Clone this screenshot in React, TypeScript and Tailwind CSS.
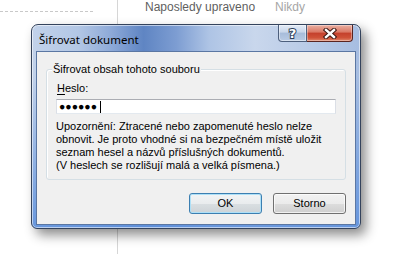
export default function App() {
  const bodyFont = "font-['Liberation_Sans',Arial,sans-serif]";
  return (
    <div className={`relative w-[405px] h-[254px] bg-white overflow-hidden ${bodyFont}`}>
      {/* background page */}
      <div className="flex h-full">
        <div className="w-[117px] pt-[11px]">
          <div className="w-[93px] border-t border-dashed border-[#c9c9c9]" />
        </div>
        <div className="flex-1 border-l border-[#d6d6d6] flex items-start pl-[27px] pt-[1px] text-[12px] leading-[13px]">
          <span className="text-[#5f5f5f] w-[130px]">Naposledy upraveno</span>
          <span className="text-[#a6a6a6]">Nikdy</span>
        </div>
      </div>

      {/* dialog */}
      <div className="absolute left-[31px] top-[24px] w-[330px] h-[205px] rounded-t-[7px] rounded-b-[6px] border border-[#34435c] shadow-[inset_0_0_0_1px_rgba(255,255,255,0.55),5px_6px_12px_rgba(0,0,0,0.45)] bg-[linear-gradient(180deg,rgba(120,165,225,0)_25%,rgba(95,145,220,0.9)_100%),linear-gradient(90deg,#c2d2ea_0%,#b3c7e5_14%,#8eaad8_24%,#5f85c3_34%,#7d9dd2_44%,#aec4e5_54%,#c9d7ec_68%,#b9cbe7_84%,#a6bde1_100%)] flex flex-col">
        <div className="h-[27px] pl-[7px] pt-[3px] flex items-center text-[11.5px] text-black font-['Noto_Sans',sans-serif]">
          Šifrovat dokument
        </div>

        {/* caption buttons */}
        <div className="absolute top-0 right-[7px] flex h-[17px]">
          <div className="w-[29px] h-[17px] border border-t-0 border-[#4d5f7c] rounded-bl-[4px] bg-[linear-gradient(180deg,#e3ebf6_0%,#c8d6ea_45%,#a7bcda_50%,#b9cbe4_100%)] shadow-[inset_0_0_0_1px_rgba(255,255,255,0.45)] flex items-center justify-center">
            <span className="text-[13px] leading-[13px] font-bold text-white font-['DejaVu_Sans',sans-serif] [-webkit-text-stroke:2px_#2f3f5a] [paint-order:stroke_fill]">?</span>
          </div>
          <div className="w-[46px] h-[17px] border border-t-0 border-l-0 border-[#5a2420] rounded-br-[4px] bg-[linear-gradient(180deg,#eab0a3_0%,#da7763_45%,#c4402c_50%,#cf5238_80%,#e18a6f_100%)] shadow-[inset_0_0_0_1px_rgba(255,255,255,0.35)] flex items-center justify-center">
            <svg width="14" height="11" viewBox="0 0 14 11">
              <path d="M3 2 L11 9 M11 2 L3 9" stroke="#3b1712" strokeWidth="4.4" strokeLinecap="square" fill="none" />
              <path d="M3 2 L11 9 M11 2 L3 9" stroke="#ffffff" strokeWidth="2.4" strokeLinecap="square" fill="none" />
            </svg>
          </div>
        </div>

        {/* client area */}
        <div className="mx-[5px] h-[172px] bg-[#f0f0f0] shadow-[0_0_0_1px_#5b77a3] text-[11px] text-black">
          <div className="pl-[9px] pr-[9px] pt-[17px]">
            <div className="relative h-[111px] border border-[#d5dfe5] rounded-[3px] shadow-[inset_1px_1px_0_#ffffff] pl-[9px] pr-[9px] pt-[12px]">
              <span className="absolute left-[5px] -top-[7px] px-[1px] bg-[#f0f0f0] leading-[13px] whitespace-nowrap">
                Šifrovat obsah tohoto souboru
              </span>
              <div className="leading-[13px] ml-[1px]">
                <span className="underline underline-offset-[2px]">H</span>eslo:
              </div>
              <div className="mt-[4px] h-[15px] border border-[#dbdfe6] border-t-[#abadb3] border-b-[#e3e9ef] bg-white flex items-center pl-[2px]">
                <span className="text-[10.5px] leading-[11px]">●●●●●●</span>
                <span className="w-px h-[12px] bg-black ml-[3px]" />
              </div>
              <div className="mt-[6px] leading-[13px] whitespace-nowrap">
                <div>Upozornění: Ztracené nebo zapomenuté heslo nelze</div>
                <div>obnovit. Je proto vhodné si na bezpečném místě uložit</div>
                <div>seznam hesel a názvů příslušných dokumentů.</div>
                <div>(V heslech se rozlišují malá a velká písmena.)</div>
              </div>
            </div>
            <div className="flex justify-end gap-[11px] mt-[13px]">
              <button className="w-[73px] h-[21px] rounded-[3px] border border-[#3c7fb1] bg-[linear-gradient(180deg,#f2f4f5_0%,#e9ecee_50%,#dadfe2_50%,#cdd3d7_100%)] shadow-[inset_0_0_0_1px_#aee0f7] text-[11px] leading-[13px] text-black">
                OK
              </button>
              <button className="w-[73px] h-[21px] rounded-[3px] border border-[#707070] bg-[linear-gradient(180deg,#f2f2f2_0%,#ebebeb_50%,#dddddd_50%,#cfcfcf_100%)] shadow-[inset_0_0_0_1px_rgba(255,255,255,0.7)] text-[11px] leading-[13px] text-black">
                Storno
              </button>
            </div>
          </div>
        </div>
      </div>
    </div>
  );
}
